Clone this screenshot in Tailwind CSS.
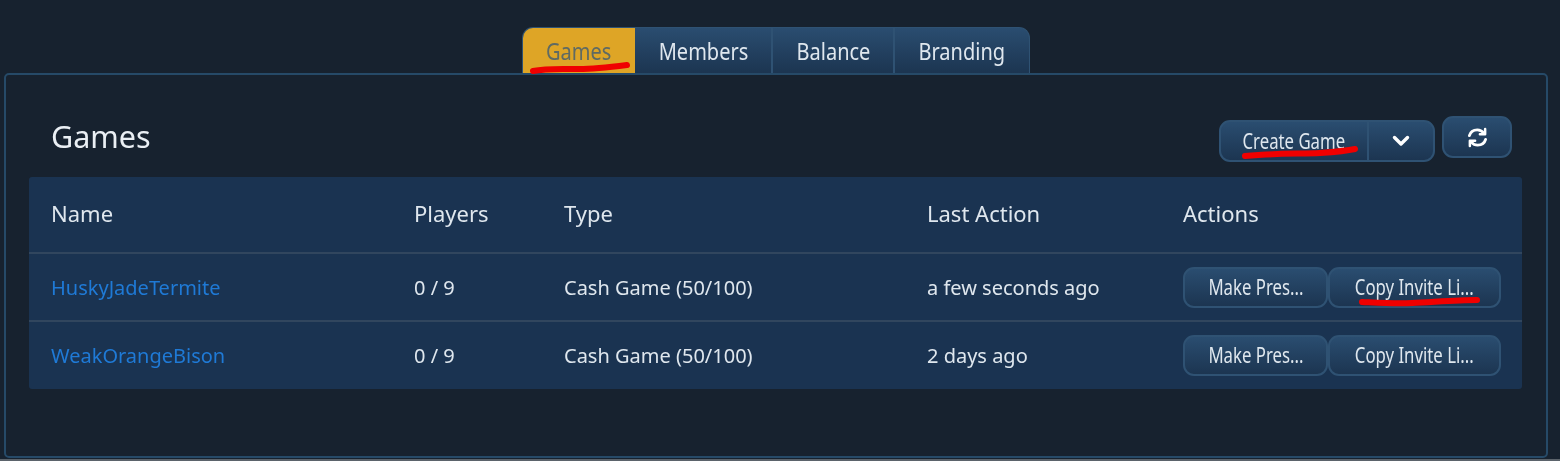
<!DOCTYPE html>
<html lang="en">
<head>
  <meta charset="UTF-8" />
  <title>Games</title>
  <script src="https://cdn.jsdelivr.net/npm/@tailwindcss/browser@4"></script>
</head>
<body class="relative w-[1560px] h-[461px] overflow-hidden bg-[#17222f] text-[#dfe7ee] font-['Noto_Sans','Open_Sans',sans-serif] text-[20px] blur-[0.4px]">

  <!-- tabs -->
  <div class="flex h-[73px] pt-[27px] pl-[522px]">
    <div class="flex h-[46px] rounded-t-[11px] border border-b-0 border-[#2f5273] overflow-hidden bg-gradient-to-b from-[#2a4d70] to-[#1c3551]">
      <div class="w-[112px] pt-[2px] flex items-center justify-center bg-[#dea526] text-[#5f6a63] text-[23px]"><span class="inline-block scale-x-[.87]">Games</span></div>
      <div class="w-[138px] pt-[2px] flex items-center justify-center border-r-2 border-[#2f5273] text-[23px]"><span class="inline-block scale-x-[.87]">Members</span></div>
      <div class="w-[122px] pt-[2px] flex items-center justify-center border-r-2 border-[#2f5273] text-[23px]"><span class="inline-block scale-x-[.87]">Balance</span></div>
      <div class="w-[134px] pt-[2px] flex items-center justify-center text-[23px]"><span class="inline-block scale-x-[.87]">Branding</span></div>
    </div>
  </div>

  <!-- panel -->
  <div class="ml-[4px] w-[1544px] h-[385px] rounded-[5px] border-2 border-[#264a68] px-[23px]">
    <div class="flex justify-between h-[102px]">
      <h1 class="pl-[22px] pt-[40px] text-[30.5px] leading-[42px] text-[#eaeff4]">Games</h1>
      <div class="flex items-start gap-[7px] pt-[41px] pr-[11px]">
        <div class="mt-[4px] flex h-[42px] w-[216px] rounded-[11px] border-2 border-[#2f5273] bg-gradient-to-b from-[#2a4d70] to-[#1c3551] overflow-hidden">
          <div class="w-[148px] flex items-center justify-center border-r-2 border-[#2f5273] text-[21.5px]"><span class="inline-block scale-x-[.78]">Create Game</span></div>
          <div class="flex-1 flex items-center justify-center">
            <svg width="18" height="12" viewBox="0 0 18 12" fill="none" stroke="#fff" stroke-width="3.4" stroke-linecap="round" stroke-linejoin="round"><path d="M2.5 2.5 9 9l6.5-6.5"/></svg>
          </div>
        </div>
        <button class="flex items-center justify-center w-[70px] h-[42px] rounded-[11px] border-2 border-[#2f5273] bg-gradient-to-b from-[#2a4d70] to-[#1c3551]">
          <svg width="21" height="21" viewBox="0 0 22 22" fill="none" stroke="#fff" stroke-width="3" stroke-linecap="round" stroke-linejoin="round"><path d="M2.5 9C3.5 5.5 6.8 3 10.8 3c2.8 0 5 1.2 6.7 3.2"/><path d="M19 2v5.5h-5.5" stroke-width="2.6"/><path d="M19.5 13c-1 3.5-4.3 6-8.3 6-2.8 0-5-1.2-6.7-3.2"/><path d="M3 20v-5.5h5.5" stroke-width="2.6"/></svg>
        </button>
      </div>
    </div>

    <table class="w-[1493px] table-fixed bg-[#1a3351] border-collapse rounded-[3px]">
      <colgroup><col class="w-[385px]" /><col class="w-[150px]" /><col class="w-[363px]" /><col class="w-[256px]" /><col /></colgroup>
      <thead>
        <tr class="h-[76px] text-left border-b-2 border-[#31465e] text-[22px]">
          <th class="pl-[22px] pb-[2px] font-normal">Name</th>
          <th class="pb-[2px] font-normal">Players</th>
          <th class="pb-[2px] font-normal">Type</th>
          <th class="pb-[2px] font-normal">Last Action</th>
          <th class="pb-[2px] font-normal">Actions</th>
        </tr>
      </thead>
      <tbody>
        <tr class="h-[68px] border-b-2 border-[#31465e]">
          <td class="pl-[22px] pt-[2px] text-[#1f7ad6]">HuskyJadeTermite</td>
          <td class="pt-[2px]">0 / 9</td>
          <td class="pt-[2px]">Cash Game (50/100)</td>
          <td class="pt-[2px]">a few seconds ago</td>
          <td>
            <div class="flex">
              <button class="w-[145px] h-[41px] rounded-[11px] border-2 border-[#2f5273] bg-gradient-to-b from-[#2a4d70] to-[#1c3551] text-[21.5px]"><span class="inline-block scale-x-[.78]">Make Pres...</span></button>
              <button class="w-[173px] h-[41px] rounded-[11px] border-2 border-[#2f5273] bg-gradient-to-b from-[#2a4d70] to-[#1c3551] text-[21.5px]"><span class="inline-block scale-x-[.78]">Copy Invite Li...</span></button>
            </div>
          </td>
        </tr>
        <tr class="h-[68px]">
          <td class="pl-[22px] text-[#1f7ad6]">WeakOrangeBison</td>
          <td>0 / 9</td>
          <td>Cash Game (50/100)</td>
          <td>2 days ago</td>
          <td>
            <div class="flex">
              <button class="w-[145px] h-[41px] rounded-[11px] border-2 border-[#2f5273] bg-gradient-to-b from-[#2a4d70] to-[#1c3551] text-[21.5px]"><span class="inline-block scale-x-[.78]">Make Pres...</span></button>
              <button class="w-[173px] h-[41px] rounded-[11px] border-2 border-[#2f5273] bg-gradient-to-b from-[#2a4d70] to-[#1c3551] text-[21.5px]"><span class="inline-block scale-x-[.78]">Copy Invite Li...</span></button>
            </div>
          </td>
        </tr>
      </tbody>
    </table>
  </div>

  <!-- hand-drawn red underlines -->
  <svg class="absolute left-0 top-0 pointer-events-none" width="1560" height="461" fill="none" stroke="#f00000" stroke-width="6" stroke-linecap="round">
    <path d="M533 71c14-3 28-2 46-2 16 0 32-2 48-4"/>
    <path d="M1245 156c30-3 55-2 75-3 14-1 26-2 35-4"/>
    <path d="M1362 302c20 1 35 2 50 1 22-1 45-3 65-3"/>
  </svg>
  <div class="absolute left-0 bottom-0 w-full h-[2px] bg-[#5b636b]"></div>
</body>
</html>
